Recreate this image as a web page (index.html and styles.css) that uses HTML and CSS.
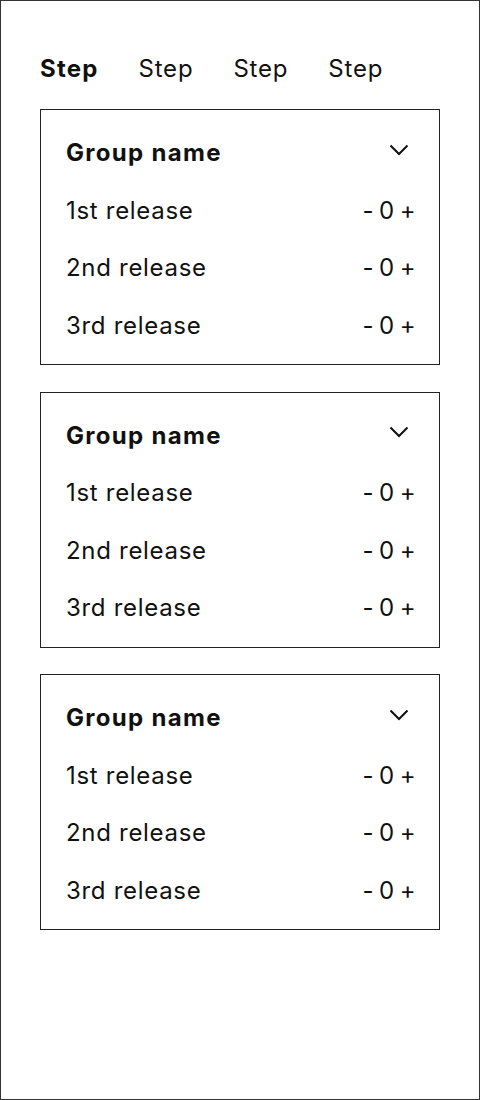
FILE: index.html
```html
<!DOCTYPE html>
<html lang="en">
<head>
    <meta charset="UTF-8">
    <meta name="viewport" content="width=device-width, initial-scale=1.0">
    <title>Releases</title>
    <link rel="stylesheet" href="styles.css">
</head>
<body>
    <div class="frame">
        <nav class="steps">
            <span class="step active">Step</span>
            <span class="step">Step</span>
            <span class="step">Step</span>
            <span class="step">Step</span>
        </nav>

        <div class="group">
            <div class="group-head">
                <span>Group name</span>
                <svg class="chevron" width="20" height="12" viewBox="0 0 20 12"><path d="M1.5 1.5 L10 10 L18.5 1.5" fill="none" stroke="#111" stroke-width="2"/></svg>
            </div>
            <div class="row"><span>1st release</span><span class="counter">- 0 +</span></div>
            <div class="row"><span>2nd release</span><span class="counter">- 0 +</span></div>
            <div class="row"><span>3rd release</span><span class="counter">- 0 +</span></div>
        </div>

        <div class="group">
            <div class="group-head">
                <span>Group name</span>
                <svg class="chevron" width="20" height="12" viewBox="0 0 20 12"><path d="M1.5 1.5 L10 10 L18.5 1.5" fill="none" stroke="#111" stroke-width="2"/></svg>
            </div>
            <div class="row"><span>1st release</span><span class="counter">- 0 +</span></div>
            <div class="row"><span>2nd release</span><span class="counter">- 0 +</span></div>
            <div class="row"><span>3rd release</span><span class="counter">- 0 +</span></div>
        </div>

        <div class="group">
            <div class="group-head">
                <span>Group name</span>
                <svg class="chevron" width="20" height="12" viewBox="0 0 20 12"><path d="M1.5 1.5 L10 10 L18.5 1.5" fill="none" stroke="#111" stroke-width="2"/></svg>
            </div>
            <div class="row"><span>1st release</span><span class="counter">- 0 +</span></div>
            <div class="row"><span>2nd release</span><span class="counter">- 0 +</span></div>
            <div class="row"><span>3rd release</span><span class="counter">- 0 +</span></div>
        </div>
    </div>
</body>
</html>
```

FILE: styles.css
```css
* { box-sizing: border-box; }
body { margin: 0; font-family: Inter, "Noto Sans", sans-serif; color: #111; background: #fff; }
.frame { width: 480px; height: 1100px; border: 1px solid #333; padding: 47px 39px 0; display: flex; flex-direction: column; gap: 26.5px; }
.steps { display: flex; gap: 40px; height: 40px; align-items: center; font-size: 24px; letter-spacing: 0.8px; margin-bottom: -5.5px; }
.step.active { font-weight: 700; letter-spacing: 1.2px; }
.group { border: 1px solid #222; padding: 14px 26px 10px 25px; }
.group-head, .row { display: flex; justify-content: space-between; align-items: center; height: 57.5px; font-size: 24px; letter-spacing: 0.7px; }
.group-head { font-weight: 700; letter-spacing: 1.3px; }
.chevron { margin: 0 4px 6px 0; }
.counter { letter-spacing: -0.6px; margin-right: -2px; }
```
